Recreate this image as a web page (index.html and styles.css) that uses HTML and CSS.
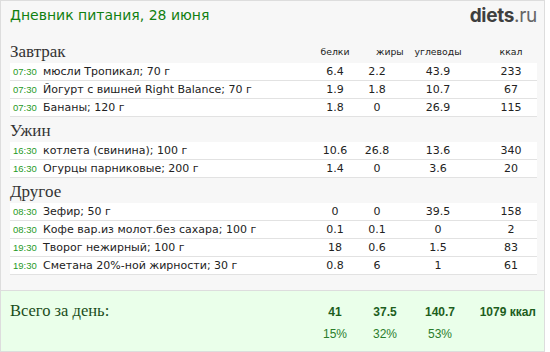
FILE: index.html
```html
<!DOCTYPE html>
<html lang="ru">
<head>
<meta charset="utf-8">
<link rel="stylesheet" href="styles.css">
</head>
<body>
<div class="box">
  <div class="top">
    <div class="title">Дневник питания, 28 июня</div>
    <div class="logo"><span class="logo-b">diets</span><span class="logo-r">.ru</span></div>
  </div>

  <div class="section">
    <div class="sec-head">
      <div class="sec-name">Завтрак</div>
      <div class="col-h c1">белки</div>
      <div class="col-h c2">жиры</div>
      <div class="col-h c3">углеводы</div>
      <div class="col-h c4">ккал</div>
    </div>
    <div class="row"><span class="time">07:30</span><span class="name">мюсли Тропикал; 70 г</span><span class="num">6.4</span><span class="num">2.2</span><span class="num">43.9</span><span class="num kc">233</span></div>
    <div class="row"><span class="time">07:30</span><span class="name">Йогурт с вишней Right Balance; 70 г</span><span class="num">1.9</span><span class="num">1.8</span><span class="num">10.7</span><span class="num kc">67</span></div>
    <div class="row"><span class="time">07:30</span><span class="name">Бананы; 120 г</span><span class="num">1.8</span><span class="num">0</span><span class="num">26.9</span><span class="num kc">115</span></div>
  </div>

  <div class="section">
    <div class="sec-head"><div class="sec-name">Ужин</div></div>
    <div class="row"><span class="time">16:30</span><span class="name">котлета (свинина); 100 г</span><span class="num">10.6</span><span class="num">26.8</span><span class="num">13.6</span><span class="num kc">340</span></div>
    <div class="row"><span class="time">16:30</span><span class="name">Огурцы парниковые; 200 г</span><span class="num">1.4</span><span class="num">0</span><span class="num">3.6</span><span class="num kc">20</span></div>
  </div>

  <div class="section">
    <div class="sec-head"><div class="sec-name">Другое</div></div>
    <div class="row"><span class="time">08:30</span><span class="name">Зефир; 50 г</span><span class="num">0</span><span class="num">0</span><span class="num">39.5</span><span class="num kc">158</span></div>
    <div class="row"><span class="time">08:30</span><span class="name">Кофе вар.из молот.без сахара; 100 г</span><span class="num">0.1</span><span class="num">0.1</span><span class="num">0</span><span class="num kc">2</span></div>
    <div class="row"><span class="time">19:30</span><span class="name">Творог нежирный; 100 г</span><span class="num">18</span><span class="num">0.6</span><span class="num">1.5</span><span class="num kc">83</span></div>
    <div class="row"><span class="time">19:30</span><span class="name">Сметана 20%-ной жирности; 30 г</span><span class="num">0.8</span><span class="num">6</span><span class="num">1</span><span class="num kc">61</span></div>
  </div>

  <div class="total">
    <div class="total-line">
      <div class="total-label">Всего за день:</div>
      <div class="tv">41</div>
      <div class="tv">37.5</div>
      <div class="tv">140.7</div>
      <div class="tv tk">1079 ккал</div>
    </div>
    <div class="total-line pct">
      <div></div>
      <div class="tp">15%</div>
      <div class="tp">32%</div>
      <div class="tp">53%</div>
      <div></div>
    </div>
  </div>
</div>
</body>
</html>
```

FILE: styles.css
```css
html, body {
  margin: 0;
  padding: 0;
  background: #ffffff;
}

.box {
  width: 543px;
  height: 350px;
  border: 1px solid #dddddd;
  background: #f7f7f7;
  display: flex;
  flex-direction: column;
}

.top {
  height: 37px;
  display: flex;
  justify-content: space-between;
  align-items: flex-start;
  padding: 0 7px 0 9px;
}

.title {
  font-family: "DejaVu Sans", sans-serif;
  font-size: 14px;
  line-height: 18px;
  color: #118011;
  padding-top: 5px;
}

.logo {
  font-family: Inter, "DejaVu Sans", sans-serif;
  font-size: 19px;
  line-height: 20px;
  padding-top: 5px;
  letter-spacing: -0.3px;
}

.logo-b {
  font-weight: 700;
  color: #3f3f3f;
}

.logo-r {
  font-weight: 400;
  color: #666666;
}

.section {
  padding: 0 7px 0 9px;
}

.sec-head {
  height: 25px;
  display: grid;
  grid-template-columns: 300px 50px 34px 88px 55px;
  align-items: end;
}

.sec-name {
  font-family: "Liberation Serif", serif;
  font-size: 17px;
  line-height: 17px;
  color: #333333;
  padding-bottom: 3px;
}

.col-h {
  font-family: "DejaVu Sans", sans-serif;
  font-size: 9.3px;
  line-height: 12px;
  color: #222222;
  text-align: center;
  padding-bottom: 5px;
}

.col-h.c2 {
  padding-left: 16px;
}

.col-h.c4 {
  padding-left: 3px;
}

.row {
  display: grid;
  grid-template-columns: 30px 267px 50px 34px 88px 55px;
  padding-left: 3px;
  height: 17px;
  line-height: 17px;
  background: #ffffff;
  border-bottom: 1px solid #e2e2e2;
  font-family: "DejaVu Sans", sans-serif;
  font-size: 11px;
  color: #222222;
  white-space: nowrap;
}

.time {
  font-family: "Liberation Sans", sans-serif;
  font-size: 9.5px;
  color: #1f9a1f;
}

.num {
  text-align: center;
}

.num.kc {
  padding-left: 3px;
}

.total {
  margin-top: auto;
  height: 60px;
  border-top: 1px solid #dddddd;
  background: #eaffea;
  padding: 0 7px 0 9px;
}

.total-line {
  display: grid;
  grid-template-columns: 300px 50px 50px 60px 1fr;
  align-items: baseline;
}

.total-label {
  font-family: "Liberation Serif", serif;
  font-size: 16.5px;
  line-height: 20px;
  color: #1a4d1a;
  padding-top: 10px;
}

.tv {
  font-family: "Liberation Sans", sans-serif;
  font-weight: 700;
  font-size: 12px;
  color: #1d5e1d;
  text-align: center;
}

.tv.tk {
  text-align: right;
  padding-right: 1px;
}

.pct {
  margin-top: 6px;
}

.tp {
  font-family: "Liberation Sans", sans-serif;
  font-size: 12px;
  line-height: 14px;
  color: #2b7d2b;
  text-align: center;
}
```
